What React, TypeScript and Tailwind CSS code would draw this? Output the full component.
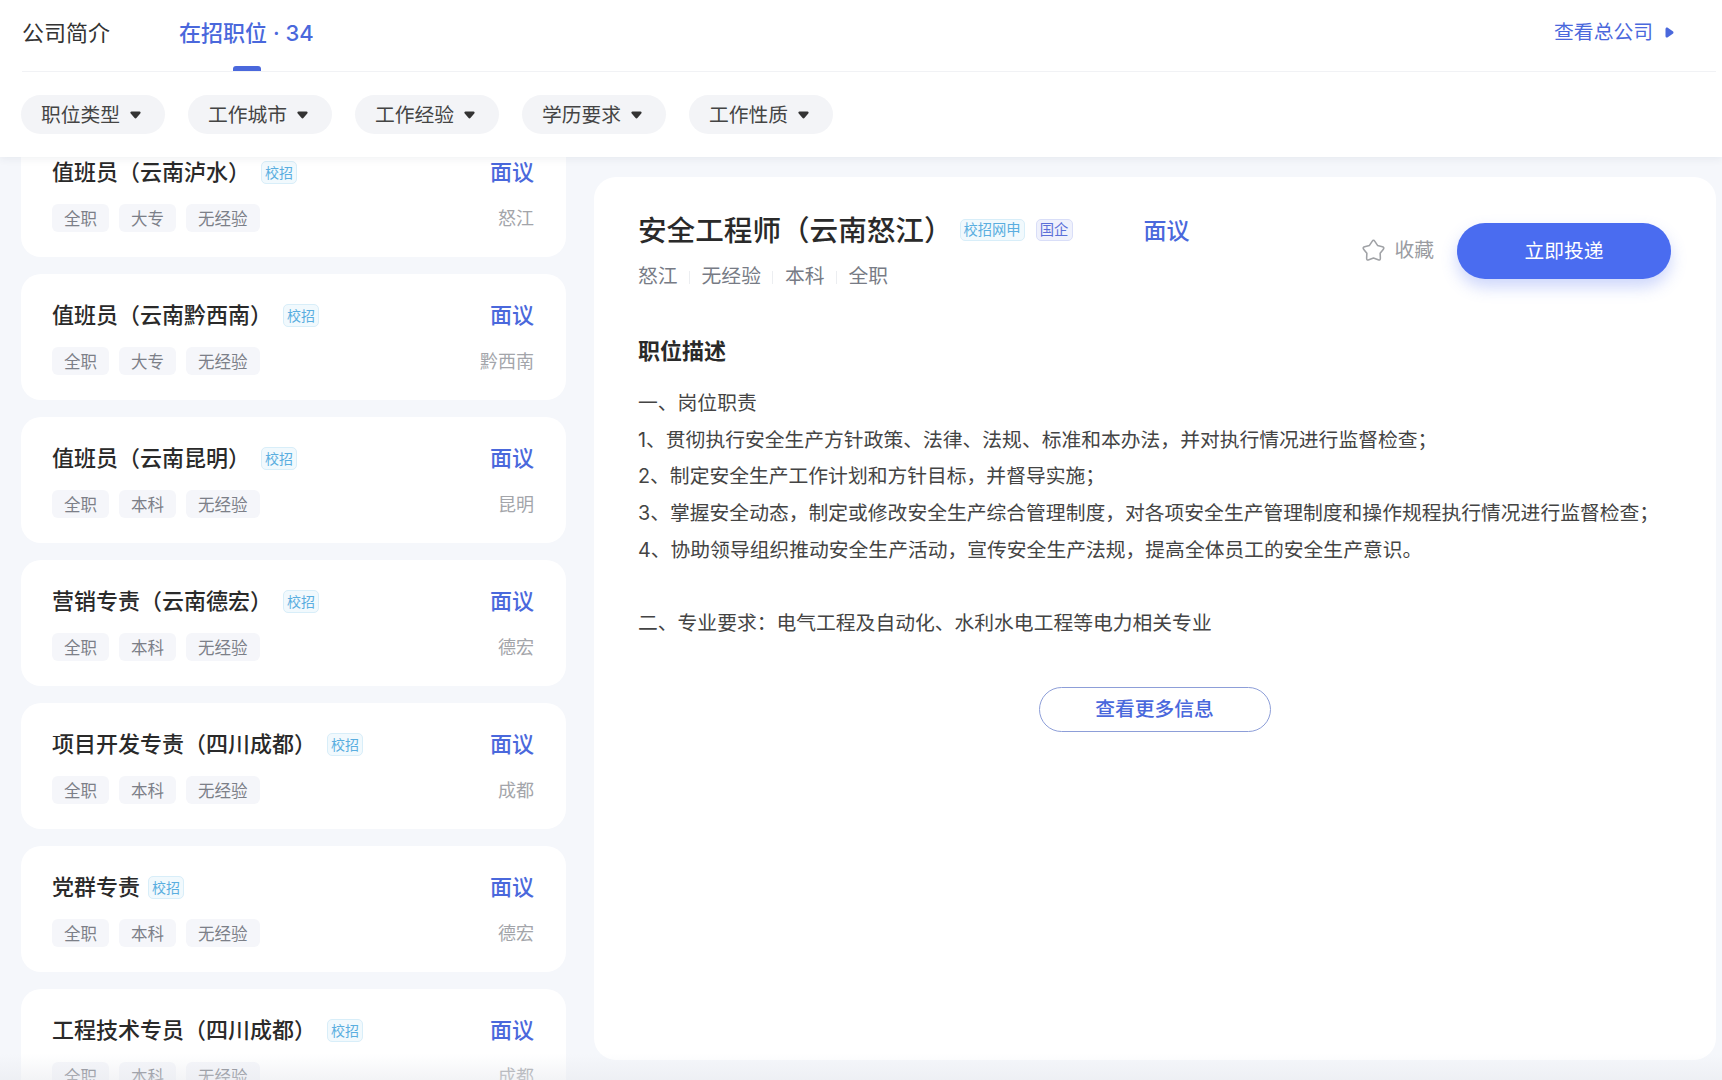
interface Job {
  title: string
  edu: string
  city: string
}

const jobs: Job[] = [
  { title: "值班员（云南泸水）", edu: "大专", city: "怒江" },
  { title: "值班员（云南黔西南）", edu: "大专", city: "黔西南" },
  { title: "值班员（云南昆明）", edu: "本科", city: "昆明" },
  { title: "营销专责（云南德宏）", edu: "本科", city: "德宏" },
  { title: "项目开发专责（四川成都）", edu: "本科", city: "成都" },
  { title: "党群专责", edu: "本科", city: "德宏" },
  { title: "工程技术专员（四川成都）", edu: "本科", city: "成都" },
]

const filters = ["职位类型", "工作城市", "工作经验", "学历要求", "工作性质"]

const lines = [
  "一、岗位职责",
  "1、贯彻执行安全生产方针政策、法律、法规、标准和本办法，并对执行情况进行监督检查；",
  "2、制定安全生产工作计划和方针目标，并督导实施；",
  "3、掌握安全动态，制定或修改安全生产综合管理制度，对各项安全生产管理制度和操作规程执行情况进行监督检查；",
  "4、协助领导组织推动安全生产活动，宣传安全生产法规，提高全体员工的安全生产意识。",
  "",
  "二、专业要求：电气工程及自动化、水利水电工程等电力相关专业",
]

function JobCard({ job }: { job: Job }) {
  return (
    <div className="h-[126px] shrink-0 rounded-[20px] bg-white pl-[31px] pr-[32px] pt-[26px]">
      <div className="flex h-[30px] items-center justify-between">
        <div className="flex items-center">
          <span className="text-[22px] font-medium leading-[30px] text-[#2a2a2a]">{job.title}</span>
          <span className={`flex h-[23px] w-[36px] items-center justify-center rounded-[5px] border border-[#d8eef9] bg-[#f1f9fd] text-[14px] text-[#5aaee0] ${job.title.endsWith("）") ? "ml-[11px]" : "ml-[8px]"}`}>
            校招
          </span>
        </div>
        <span className="text-[22px] font-medium leading-[30px] text-[#4a68dc]">面议</span>
      </div>
      <div className="mt-[17px] flex h-[28px] items-center justify-between">
        <div className="flex gap-[10px]">
          {["全职", job.edu, "无经验"].map((tag) => (
            <span key={tag} className="flex h-[28px] items-center rounded-[6px] bg-[#f5f6fa] px-[12px] pt-[2px] text-[16.5px] text-[#7c7f88]">
              {tag}
            </span>
          ))}
        </div>
        <span className="pt-[1px] text-[18px] text-[#a3a5aa]">{job.city}</span>
      </div>
    </div>
  )
}

export default function App() {
  return (
    <div className="relative flex h-[1080px] w-full flex-col overflow-hidden bg-[#f5f7fb] font-['Inter','Noto_Sans_CJK_SC',sans-serif]">
      <header className="relative z-10 h-[157px] shrink-0 bg-white shadow-[0_2px_8px_rgba(40,50,80,0.07)]">
        <div className="ml-[22px] mr-[6px] flex h-[72px] items-start justify-between border-b border-[#f1f2f5] pr-[42px]">
          <div className="flex h-[66px] items-center">
            <span className="text-[22px] text-[#333]">公司简介</span>
            <div className="relative ml-[69px] flex h-[66px] items-center">
              <span className="text-[22px] font-medium text-[#4a68dc]">在招职位 · 34</span>
              <div className="absolute left-[54px] top-[66px] h-[5px] w-[28px] rounded-t-[3px] bg-[#4a68dc]" />
            </div>
          </div>
          <div className="flex h-[66px] items-center gap-[12px]">
            <span className="text-[19.8px] text-[#4a68dc]">查看总公司</span>
            <svg width="9" height="11" viewBox="0 0 9 11" className="-mt-[2px] fill-[#4a68dc]">
              <path d="M0.5 2 C0.5 0.6 1.7 0 2.8 0.7 L7.8 4.2 C8.7 4.9 8.7 6.1 7.8 6.8 L2.8 10.3 C1.7 11 0.5 10.4 0.5 9 Z" />
            </svg>
          </div>
        </div>
        <div className="ml-[21px] mt-[23px] flex gap-[23px]">
          {filters.map((f) => (
            <div key={f} className="flex h-[39px] w-[144px] items-center rounded-full bg-[#f3f4f7] pl-[20px] text-[19.8px] text-[#444]">
              <span className="pt-[2px]">{f}</span>
              <svg width="11" height="8" viewBox="0 0 11 8" className="ml-[10px] fill-[#333]">
                <path d="M1.5 0.5 H9.5 C10.6 0.5 11 1.6 10.3 2.4 L6.6 6.8 C6 7.6 5 7.6 4.4 6.8 L0.7 2.4 C0 1.6 0.4 0.5 1.5 0.5 Z" />
              </svg>
            </div>
          ))}
        </div>
      </header>

      <main className="flex min-h-0 flex-1">
        <div className="ml-[21px] w-[545px] shrink-0 overflow-hidden">
          <div className="-mt-[26px] flex flex-col gap-[17px]">
            {jobs.map((job) => (
              <JobCard key={job.title} job={job} />
            ))}
          </div>
        </div>

        <section className="mb-[20px] ml-[28px] mr-[6px] mt-[20px] flex-1 rounded-[22px] bg-white pl-[44px] pr-[45px] pt-[39px]">
          <div className="flex items-start justify-between">
            <div>
              <div className="flex h-[30px] items-center">
                <h1 className="text-[28.6px] font-medium leading-[30px] text-[#2a2a2a]">安全工程师（云南怒江）</h1>
                <span className="ml-[7px] -mt-[2px] flex h-[22px] w-[65px] items-center justify-center rounded-[5px] border border-[#d8eef9] bg-[#f1f9fd] text-[14.3px] text-[#5aaee0]">
                  校招网申
                </span>
                <span className="ml-[11px] -mt-[2px] flex h-[22px] w-[37px] items-center justify-center rounded-[5px] border border-[#d9def8] bg-[#eff1fc] text-[14.3px] text-[#5b70d8]">
                  国企
                </span>
                <span className="ml-[71px] text-[23px] font-medium text-[#4a68dc]">面议</span>
              </div>
              <div className="mt-[19px] flex h-[24px] items-center text-[19.8px] text-[#777b85]">
                {["怒江", "无经验", "本科", "全职"].map((t, i) => (
                  <div key={t} className="flex items-center">
                    {i > 0 && <span className="mx-[11.5px] h-[13px] w-px bg-[#eceef1]" />}
                    <span>{t}</span>
                  </div>
                ))}
              </div>
            </div>
            <div className="mt-[7px] flex items-center">
              <svg width="27" height="27" viewBox="0 0 24 24" fill="none" className="-mt-[2px] stroke-[#a0a2a6]" strokeWidth="1.4" strokeLinejoin="round">
                <path d="M10.8 3.84 Q12 2 13.2 3.84 L15.6 7.5 L19.9 8.7 Q22 9.3 20.62 11.02 L17.9 14.4 L18.1 18.8 Q18.2 21 16.13 20.23 L12 18.7 L7.87 20.23 Q5.8 21 5.9 18.8 L6.1 14.4 L3.38 11.02 Q2 9.3 4.1 8.7 L8.4 7.5 Z" />
              </svg>
              <span className="ml-[7px] text-[19.8px] text-[#9a9ca1]">收藏</span>
              <button className="ml-[23px] flex h-[56px] w-[214px] items-center justify-center rounded-full bg-[#4a6cf0] pt-[1px] text-[19.8px] text-white shadow-[0_8px_16px_rgba(74,108,240,0.28)]">
                立即投递
              </button>
            </div>
          </div>

          <h2 className="mt-[47px] text-[22px] font-bold leading-[30px] text-[#2a2a2a]">职位描述</h2>
          <div className="mt-[19px] text-[19.8px] leading-[36.7px] text-[#444]">
            {lines.map((l, i) => (
              <p key={i} className="h-[36.7px] whitespace-nowrap">{l}</p>
            ))}
          </div>
          <div className="mt-[45px] flex justify-center">
            <button className="flex h-[45px] w-[232px] items-center justify-center rounded-full border border-[#8d9ed8] pt-[1px] text-[19.8px] font-medium text-[#4a68dc]">
              查看更多信息
            </button>
          </div>
        </section>
      </main>

      {/* bottom fade over the list */}
      <div className="pointer-events-none absolute bottom-0 left-0 right-0 h-[26px] bg-gradient-to-b from-transparent to-[#e6e8ed]/50" />
    </div>
  )
}
